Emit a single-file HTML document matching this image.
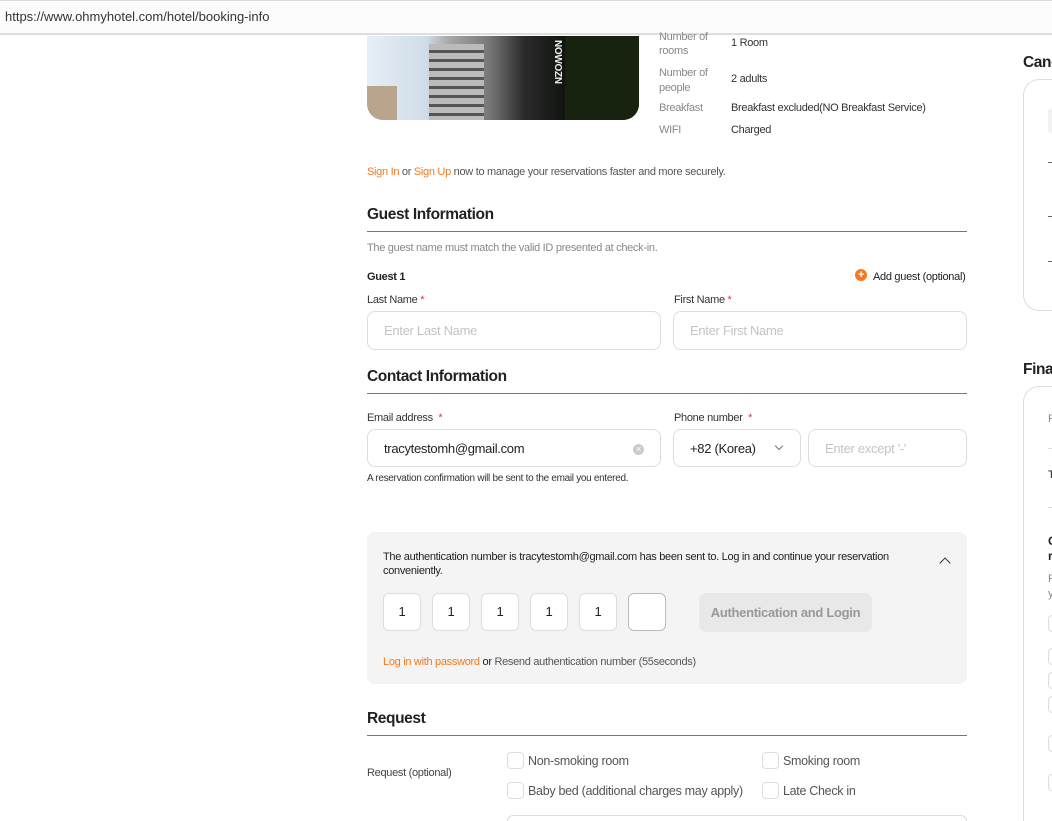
<!DOCTYPE html>
<html style="overflow:hidden;width:1052px;height:821px"><head><meta charset="utf-8"><style>
*{box-sizing:border-box;margin:0;padding:0}
body{width:1052px;height:821px;overflow:hidden;background:#fff;font-family:"Liberation Sans",sans-serif;color:#222;position:relative;letter-spacing:-0.3px}
.a{position:absolute;white-space:nowrap}
.s11{font-size:11px}
.g{color:#888}
.o{color:#f47920}
.h{font-size:15.5px;font-weight:bold;color:#222;letter-spacing:-0.4px}
.line{position:absolute;left:367px;width:600px;height:1px;background:#777}
.inp{position:absolute;border:1px solid #ddd;border-radius:8px;background:#fff;height:39px;font-size:13px;line-height:37px;padding-left:16px}
.ph{color:#c4c4c4}
.box{position:absolute;width:38px;height:38px;border:1px solid #ddd;border-radius:6px;background:#fff;font-size:13px;text-align:center;line-height:36px}
.cb{position:absolute;width:17px;height:17px;border:1px solid #ddd;border-radius:4px}
.st{color:#e33}
</style></head><body>
<div class="a" style="left:0;top:0;width:1052px;height:35px;background:#fcfcfc;border-bottom:2px solid #ddd;border-top:1px solid #ddd"></div>
<div class="a" style="left:5px;top:9px;font-size:13px;color:#333;letter-spacing:0">https://www.ohmyhotel.com/hotel/booking-info</div>

<div class="a" style="left:367px;top:36px;width:272px;height:84px;border-radius:0 0 16px 16px;overflow:hidden;background:linear-gradient(90deg,#e6eef5 0%,#cfdce8 22%,#a8a8a8 30%,#777 45%,#2a2a2a 58%,#111511 72%,#0d120c 100%)">
<div style="position:absolute;left:0;top:50px;width:30px;height:34px;background:#b9a48e"></div>
<div style="position:absolute;left:62px;top:8px;width:55px;height:76px;background:repeating-linear-gradient(180deg,#bbb 0 6px,#555 6px 9px)"></div>
<div style="position:absolute;left:178px;top:0;width:18px;height:84px;color:#eee;font-size:10px;writing-mode:vertical-rl;font-weight:bold;padding-top:4px">NOWOZN</div>
<div style="position:absolute;left:198px;top:0;width:74px;height:84px;background:#17220f"></div>
</div>

<div class="a s11 g" style="left:659px;top:30px;line-height:14px">Number of<br>rooms</div>
<div class="a s11" style="left:731px;top:37px;color:#333">1 Room</div>
<div class="a s11 g" style="left:659px;top:66px;line-height:15px">Number of<br>people</div>
<div class="a s11" style="left:731px;top:73px;color:#333">2 adults</div>
<div class="a s11 g" style="left:659px;top:102px">Breakfast</div>
<div class="a s11" style="left:731px;top:102px;color:#333">Breakfast excluded(NO Breakfast Service)</div>
<div class="a s11 g" style="left:659px;top:124px">WIFI</div>
<div class="a s11" style="left:731px;top:124px;color:#333">Charged</div>

<div class="a s11" style="left:367px;top:166px;color:#555"><span class="o">Sign In</span> or <span class="o">Sign Up</span> now to manage your reservations faster and more securely.</div>

<div class="a h" style="left:367px;top:206px">Guest Information</div>
<div class="line" style="top:231px"></div>
<div class="a s11 g" style="left:367px;top:242px">The guest name must match the valid ID presented at check-in.</div>
<div class="a s11" style="left:367px;top:271px;font-weight:bold">Guest 1</div>
<div class="a" style="left:855px;top:269px;width:12px;height:12px;border-radius:50%;background:#f47920;color:#fff;font-size:11px;line-height:12px;text-align:center;font-weight:bold">+</div>
<div class="a s11" style="left:873px;top:271px">Add guest (optional)</div>
<div class="a s11" style="left:367px;top:294px;color:#333">Last Name <span class="st">*</span></div>
<div class="a s11" style="left:674px;top:294px;color:#333">First Name <span class="st">*</span></div>
<div class="inp" style="left:367px;top:311px;width:294px"><span class="ph">Enter Last Name</span></div>
<div class="inp" style="left:673px;top:311px;width:294px"><span class="ph">Enter First Name</span></div>

<div class="a h" style="left:367px;top:368px">Contact Information</div>
<div class="line" style="top:393px"></div>
<div class="a s11" style="left:367px;top:412px;color:#333">Email address <span class="st">&nbsp;*</span></div>
<div class="a s11" style="left:674px;top:412px;color:#333">Phone number <span class="st">&nbsp;*</span></div>
<div class="inp" style="left:367px;top:429px;width:294px;height:38px;color:#222">tracytestomh@gmail.com</div>
<div class="a" style="left:633px;top:444px;width:11px;height:11px;border-radius:50%;background:#ccc;color:#fff;font-size:9px;line-height:11px;text-align:center">×</div>
<div class="inp" style="left:673px;top:429px;width:128px;height:38px;color:#222">+82 (Korea)</div>
<div class="a" style="left:776px;top:443px;width:6px;height:6px;border-right:1.3px solid #777;border-bottom:1.3px solid #777;transform:rotate(45deg)"></div>
<div class="inp" style="left:808px;top:429px;width:159px;height:38px"><span class="ph">Enter except '-'</span></div>
<div class="a" style="left:367px;top:473px;font-size:10px;color:#333">A reservation confirmation will be sent to the email you entered.</div>

<div class="a" style="left:367px;top:532px;width:600px;height:152px;background:#f4f4f4;border-radius:8px"></div>
<div class="a s11" style="left:383px;top:550px;line-height:14px;color:#222">The authentication number is tracytestomh@gmail.com has been sent to. Log in and continue your reservation<br>conveniently.</div>
<div class="a" style="left:941px;top:559px;width:8px;height:8px;border-left:1.5px solid #333;border-top:1.5px solid #333;transform:rotate(45deg)"></div>
<div class="box" style="left:383px;top:593px">1</div>
<div class="box" style="left:432px;top:593px">1</div>
<div class="box" style="left:481px;top:593px">1</div>
<div class="box" style="left:530px;top:593px">1</div>
<div class="box" style="left:579px;top:593px">1</div>
<div class="box" style="left:628px;top:593px;border-color:#bbb"></div>
<div class="a" style="left:699px;top:593px;width:173px;height:39px;background:#e8e8e8;border-radius:7px;color:#999;font-size:13px;line-height:39px;text-align:center;font-weight:bold">Authentication and Login</div>
<div class="a s11" style="left:383px;top:656px;color:#555"><span class="o">Log in with password</span> <span style="color:#222">or</span> Resend authentication number (55seconds)</div>

<div class="a h" style="left:367px;top:710px">Request</div>
<div class="line" style="top:735px"></div>
<div class="a s11" style="left:367px;top:767px;color:#444">Request (optional)</div>
<div class="cb" style="left:507px;top:752px"></div><div class="a" style="left:528px;top:754px;font-size:12.5px;color:#555">Non-smoking room</div>
<div class="cb" style="left:762px;top:752px"></div><div class="a" style="left:783px;top:754px;font-size:12.5px;color:#555">Smoking room</div>
<div class="cb" style="left:507px;top:782px"></div><div class="a" style="left:528px;top:784px;font-size:12.5px;color:#555">Baby bed (additional charges may apply)</div>
<div class="cb" style="left:762px;top:782px"></div><div class="a" style="left:783px;top:784px;font-size:12.5px;color:#555">Late Check in</div>
<div class="a" style="left:507px;top:815px;width:460px;height:6px;border:1px solid #ddd;border-bottom:none;border-radius:10px 10px 0 0"></div>

<div class="a h" style="left:1023px;top:54px">Cancellation</div>
<div class="a" style="left:1023px;top:79px;width:29px;height:232px;border:1px solid #ddd;border-right:none;border-radius:16px 0 0 16px"></div>
<div class="a" style="left:1048px;top:108px;width:4px;height:26px;background:#f2f2f2;border-radius:6px 0 0 6px"></div>
<div class="a" style="left:1048px;top:162px;width:4px;height:1px;background:#666"></div>
<div class="a" style="left:1048px;top:216px;width:4px;height:1px;background:#666"></div>
<div class="a" style="left:1048px;top:261px;width:4px;height:1px;background:#666"></div>

<div class="a h" style="left:1023px;top:361px">Final</div>
<div class="a" style="left:1023px;top:386px;width:29px;height:435px;border:1px solid #ddd;border-right:none;border-bottom:none;border-radius:16px 0 0 0"></div>
<div class="a s11 g" style="left:1048px;top:413px">F</div>
<div class="a" style="left:1048px;top:448px;width:4px;height:1px;background:#ddd"></div>
<div class="a s11" style="left:1048px;top:469px">T</div>
<div class="a" style="left:1048px;top:507px;width:4px;height:1px;background:#ddd"></div>
<div class="a" style="left:1048px;top:534px;font-size:12px;font-weight:bold;line-height:15px">C<br>r</div>
<div class="a s11 g" style="left:1048px;top:572px;line-height:15px">F<br>y</div>
<div class="cb" style="left:1048px;top:615px;width:4px;border-right:none;border-radius:4px 0 0 4px"></div>
<div class="cb" style="left:1048px;top:648px;width:4px;border-right:none;border-radius:4px 0 0 4px"></div>
<div class="cb" style="left:1048px;top:672px;width:4px;border-right:none;border-radius:4px 0 0 4px"></div>
<div class="cb" style="left:1048px;top:696px;width:4px;border-right:none;border-radius:4px 0 0 4px"></div>
<div class="cb" style="left:1048px;top:735px;width:4px;border-right:none;border-radius:4px 0 0 4px"></div>
<div class="cb" style="left:1048px;top:774px;width:4px;border-right:none;border-radius:4px 0 0 4px"></div>
</body></html>
